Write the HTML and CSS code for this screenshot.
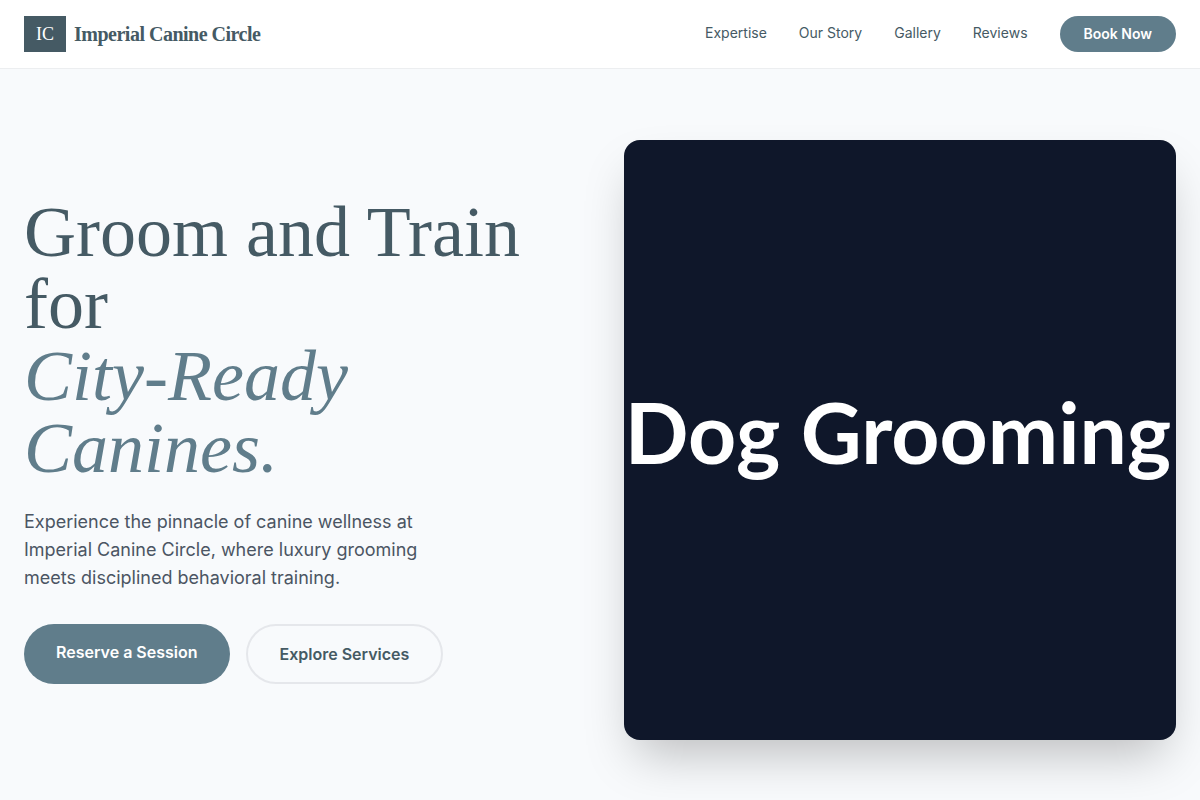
FILE: index.html
```html
<!DOCTYPE html>
<html lang="en">
<head>
	<meta charset="utf-8">
	<meta name="viewport" content="width=device-width, initial-scale=1">
	<title>Imperial Canine Circle</title>
	<link rel="stylesheet" href="styles.css">
</head>
<body>
<header class="site-header">
	<a href="#" class="brand">
		<span class="brand-mark">IC</span>
		<span class="brand-name">Imperial Canine Circle</span>
	</a>
	<nav class="site-nav">
		<a href="#expertise" class="nav-link">Expertise</a>
		<a href="#story" class="nav-link">Our Story</a>
		<a href="#gallery" class="nav-link">Gallery</a>
		<a href="#reviews" class="nav-link">Reviews</a>
		<a href="#book" class="nav-cta">Book Now</a>
	</nav>
</header>

<main class="hero">
	<div class="hero-text">
		<h1>Groom and Train for <br><em>City-Ready Canines.</em></h1>
		<p>Experience the pinnacle of canine wellness at Imperial Canine Circle, where luxury grooming meets disciplined behavioral training.</p>
		<div class="actions">
			<a href="#book" class="btn btn-primary">Reserve a Session</a>
			<a href="#expertise" class="btn btn-outline">Explore Services</a>
		</div>
	</div>
	<div class="hero-image">Dog Grooming</div>
</main>
</body>
</html>
```

FILE: styles.css
```css
:root
{
	--slate: #455a64;
	--steel: #607d8b;
	--page: #f8fafc;
	--border: #e5e7eb;
	--serif: "Liberation Serif", "Times New Roman", serif;
}

*
{
	box-sizing: border-box;
}

body
{
	margin: 0;
	background: var(--page);
	color: var(--slate);
	font-family: Inter, sans-serif;
	font-size: 16px;
	line-height: 24px;
}

a
{
	color: inherit;
	text-decoration: none;
}

.site-header
{
	display: flex;
	align-items: center;
	justify-content: space-between;
	padding: 16px 24px;
	border-bottom: 1px solid #eceef0;
	background: #fff;
}

.brand
{
	display: flex;
	align-items: center;
	gap: 8px;
	font-family: var(--serif);
}

.brand-mark
{
	padding: 4px 12px;
	background: var(--slate);
	color: #fff;
	font-size: 18px;
	line-height: 28px;
}

.brand-name
{
	font-size: 20px;
	font-weight: bold;
	letter-spacing: -0.025em;
	line-height: 28px;
}

.site-nav
{
	display: flex;
	align-items: center;
	gap: 32px;
	font-size: 14px;
	line-height: 20px;
}

.nav-link
{
	padding-bottom: 2px;
}

.nav-link:hover
{
	color: var(--steel);
}

.nav-cta
{
	padding: 8px 24px;
	border-radius: 18px;
	background: var(--steel);
	color: #fff;
	font-weight: 600;
}

.hero
{
	display: grid;
	grid-template-columns: 1fr 1fr;
	align-items: center;
	gap: 48px;
	max-width: 1280px;
	padding: 71px 24px;
	margin: 0 auto;
}

h1
{
	margin: 0 0 24px;
	font-family: var(--serif);
	font-size: 72px;
	font-weight: normal;
	line-height: 72px;
}

h1 em
{
	color: var(--steel);
}

.hero-text p
{
	max-width: 448px;
	margin: 0 0 32px;
	color: #4b5563;
	font-size: 18px;
	line-height: 28px;
}

.actions
{
	display: flex;
	flex-wrap: wrap;
	gap: 16px;
}

.btn
{
	padding: 16px 32px;
	border-radius: 30px;
	font-weight: 600;
}

.btn-primary
{
	background: var(--steel);
	color: #fff;
}

.btn-outline
{
	border: 2px solid var(--border);
}

.hero-image
{
	display: flex;
	align-items: center;
	justify-content: center;
	overflow: hidden;
	min-height: 600px;
	padding: 0 4px 16px 0;
	border-radius: 16px;
	background: #0f172a;
	box-shadow: 0 25px 50px -12px rgb(0 0 0 / 25%);
	color: #fff;
	font-family: Lato, sans-serif;
	font-size: 84px;
	font-weight: bold;
	line-height: 96px;
	white-space: nowrap;
}

@media (max-width: 800px)
{
	.hero
	{
		grid-template-columns: 1fr;
	}
}
```
